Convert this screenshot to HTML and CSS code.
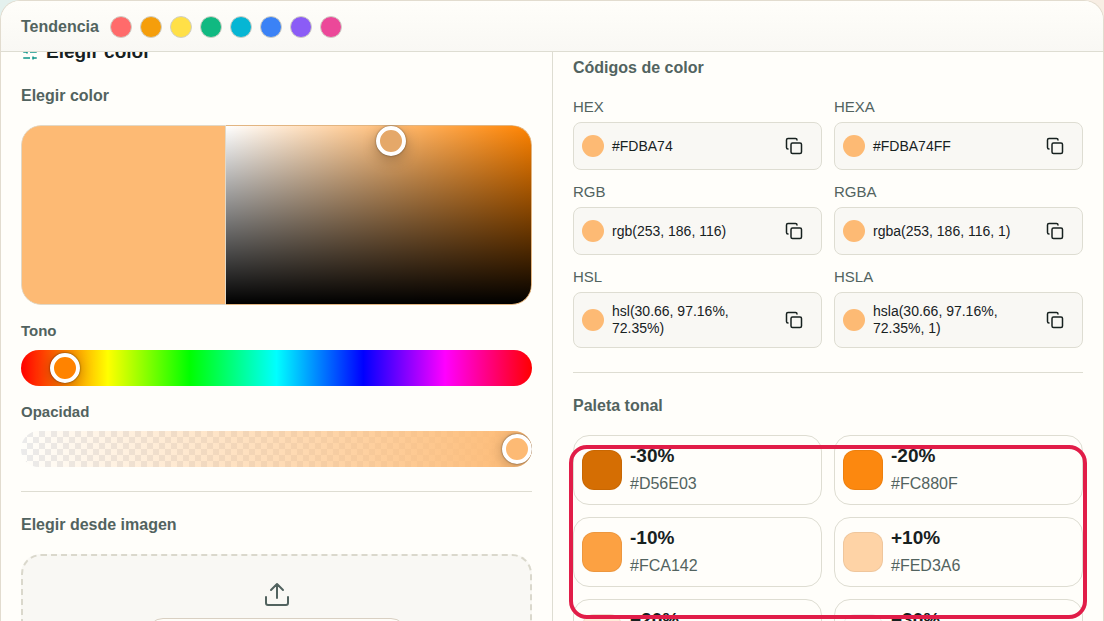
FILE: index.html
```html
<!DOCTYPE html>
<html lang="es">
<head>
    <meta charset="UTF-8">
    <meta name="viewport" content="width=device-width, initial-scale=1.0">
    <title>Elegir color</title>
    <link rel="stylesheet" href="styles.css">
</head>
<body>
    <svg class="sprite" aria-hidden="true">
        <symbol id="copy" viewBox="0 0 24 24">
            <rect x="8" y="8" width="14" height="14" rx="2"/>
            <path d="M4 16c-1.1 0-2-.9-2-2V4c0-1.1.9-2 2-2h10c1.1 0 2 .9 2 2"/>
        </symbol>
    </svg>
    <div class="panel">
        <header class="trend">
            <span class="trend-title">Tendencia</span>
            <button class="dot coral" aria-label="#FF6B6B"></button>
            <button class="dot amber" aria-label="#F59E0B"></button>
            <button class="dot yellow" aria-label="#FFE047"></button>
            <button class="dot green" aria-label="#10B981"></button>
            <button class="dot cyan" aria-label="#06B6D4"></button>
            <button class="dot blue" aria-label="#3B82F6"></button>
            <button class="dot violet" aria-label="#8B5CF6"></button>
            <button class="dot pink" aria-label="#EC4899"></button>
        </header>
        <main class="columns">
            <section class="col col-left">
                <h2 class="title">
                    <svg class="tune" viewBox="0 0 24 24"><path d="M3 4h7M14 4h7M14 2v4M3 12h5M12 12h9M8 10v4M3 20h9M16 20h5M16 18v4"/></svg>
                    Elegir color
                </h2>
                <h3 class="subtitle">Elegir color</h3>
                <div class="picker">
                    <div class="sample"></div>
                    <div class="area"><span class="handle"></span></div>
                </div>
                <label class="slider-label" for="hue">Tono</label>
                <input class="slider hue" id="hue" type="range" min="0" max="360" value="22">
                <label class="slider-label" for="alpha">Opacidad</label>
                <input class="slider alpha" id="alpha" type="range" min="0" max="100" value="100">
                <hr>
                <h3 class="subtitle">Elegir desde imagen</h3>
                <div class="dropzone">
                    <svg class="upload" viewBox="0 0 24 24"><path d="M12 16V2M6 8l6-6 6 6M1 15v6q0 2 2 2h18q2 0 2-2v-6"/></svg>
                    <button class="upload-btn" aria-label="Elegir desde imagen"></button>
                </div>
            </section>
            <section class="col col-right">
                <h3 class="subtitle">Códigos de color</h3>
                <div class="codes">
                    <div class="code">
                        <span class="code-name">HEX</span>
                        <div class="code-box"><i class="chip"></i><span class="value">#FDBA74</span><button class="copy" aria-label="HEX"><svg><use href="#copy"/></svg></button></div>
                    </div>
                    <div class="code">
                        <span class="code-name">HEXA</span>
                        <div class="code-box"><i class="chip"></i><span class="value">#FDBA74FF</span><button class="copy" aria-label="HEXA"><svg><use href="#copy"/></svg></button></div>
                    </div>
                    <div class="code">
                        <span class="code-name">RGB</span>
                        <div class="code-box"><i class="chip"></i><span class="value">rgb(253, 186, 116)</span><button class="copy" aria-label="RGB"><svg><use href="#copy"/></svg></button></div>
                    </div>
                    <div class="code">
                        <span class="code-name">RGBA</span>
                        <div class="code-box"><i class="chip"></i><span class="value">rgba(253, 186, 116, 1)</span><button class="copy" aria-label="RGBA"><svg><use href="#copy"/></svg></button></div>
                    </div>
                    <div class="code">
                        <span class="code-name">HSL</span>
                        <div class="code-box"><i class="chip"></i><span class="value">hsl(30.66, 97.16%, 72.35%)</span><button class="copy" aria-label="HSL"><svg><use href="#copy"/></svg></button></div>
                    </div>
                    <div class="code">
                        <span class="code-name">HSLA</span>
                        <div class="code-box"><i class="chip"></i><span class="value">hsla(30.66, 97.16%, 72.35%, 1)</span><button class="copy" aria-label="HSLA"><svg><use href="#copy"/></svg></button></div>
                    </div>
                </div>
                <hr>
                <h3 class="subtitle">Paleta tonal</h3>
                <div class="tones">
                    <button class="tone"><i class="swatch" style="background:#D56E03"></i><span><b>-30%</b><small>#D56E03</small></span></button>
                    <button class="tone"><i class="swatch" style="background:#FC880F"></i><span><b>-20%</b><small>#FC880F</small></span></button>
                    <button class="tone"><i class="swatch" style="background:#FCA142"></i><span><b>-10%</b><small>#FCA142</small></span></button>
                    <button class="tone"><i class="swatch" style="background:#FED3A6"></i><span><b>+10%</b><small>#FED3A6</small></span></button>
                    <button class="tone"><i class="swatch" style="background:#FEECD9"></i><span><b>+20%</b><small>#FEECD9</small></span></button>
                    <button class="tone"><i class="swatch" style="background:#FFFDFB"></i><span><b>+30%</b><small>#FFFDFB</small></span></button>
                    <div class="highlight"></div>
                </div>
            </section>
        </main>
    </div>
</body>
</html>
```
FILE: styles.css
```css
*{
    box-sizing: border-box;
}
body, html{
    margin: 0;
    height: 100%;
    overflow: hidden;
}
body{
    background: linear-gradient(90deg, #e4f1ee, #f8eee4);
    color: #17211f;
    font-family: "Liberation Sans", Arial, sans-serif;
    font-size: 16px;
    line-height: 24px;
}
button{
    font-family: inherit;
    color: inherit;
    padding: 0;
    cursor: pointer;
}
h2, h3{
    margin: 0;
}
.sprite{
    display: none;
}
.panel{
    display: flex;
    flex-direction: column;
    height: 100vh;
    border: 1px solid #e2dccf;
    border-bottom: none;
    border-radius: 20px 20px 0 0;
    background-color: #fffefa;
    overflow: hidden;
}

/* Tendencia */
.trend{
    display: flex;
    align-items: center;
    gap: 8px;
    flex: none;
    height: 51px;
    padding: 1px 20px 0;
    border-bottom: 1px solid #deddd2;
    background: linear-gradient(#fffefa, #f9f8f4);
}
.trend-title{
    margin-right: 3px;
    color: #52635f;
    font-weight: bold;
}
.dot{
    width: 22px;
    height: 22px;
    border: 1px solid #d0cfc5;
    border-radius: 50%;
}
.coral{ background-color: #ff6b6b; }
.amber{ background-color: #f59e0b; }
.yellow{ background-color: #ffe047; }
.green{ background-color: #10b981; }
.cyan{ background-color: #06b6d4; }
.blue{ background-color: #3b82f6; }
.violet{ background-color: #8b5cf6; }
.pink{ background-color: #ec4899; }

.columns{
    display: grid;
    grid-template-columns: 1fr 1fr;
    flex: 1;
    min-height: 0;
    overflow: hidden;
}
.col{
    display: flex;
    flex-direction: column;
    padding: 0 20px;
}
.col-left{
    margin-top: -12px;
}
.col-right{
    padding-top: 4px;
    border-left: 1px solid #deddd2;
}
.title{
    display: flex;
    align-items: center;
    gap: 7px;
    margin-bottom: 20px;
    font-size: 19px;
}
.tune{
    width: 18px;
    height: 18px;
    fill: none;
    stroke: #0d9488;
    stroke-width: 2;
}
.subtitle{
    color: #52635f;
    font-size: 16px;
    margin-bottom: 17px;
}
hr{
    width: 100%;
    height: 1px;
    margin: 24px 0 21px;
    border: none;
    background-color: #deddd2;
}

/* Selector */
.picker{
    display: flex;
    height: 180px;
    margin-bottom: 14px;
    border-radius: 20px;
    overflow: hidden;
}
.sample{
    flex: 2;
    border: 1px solid #e2d8c6;
    border-radius: 20px 0 0 20px;
    background-color: #fdba74;
}
.area{
    position: relative;
    flex: 3;
    border: 1px solid #e2b581;
    border-left: none;
    border-radius: 0 20px 20px 0;
    background: linear-gradient(to top, #000, transparent), linear-gradient(to right, #fff, #ff8300);
}
.handle{
    position: absolute;
    left: 54%;
    top: 0;
    width: 30px;
    height: 30px;
    margin-left: -15px;
    border: 4px solid #fff;
    border-radius: 50%;
    box-shadow: 0 0 2px rgba(0, 0, 0, 0.5), 0 4px 14px rgba(0, 0, 0, 0.25);
    background-color: #e5a869;
}
.slider-label{
    margin-bottom: 7px;
    color: #52635f;
    font-weight: bold;
    font-size: 15px;
}
.slider{
    -webkit-appearance: none;
    appearance: none;
    width: 100%;
    height: 36px;
    margin: 0 0 14px;
    border-radius: 18px;
    overflow: hidden;
}
.slider::-webkit-slider-thumb{
    -webkit-appearance: none;
    width: 30px;
    height: 30px;
    border: 4px solid #fff;
    border-radius: 50%;
    box-shadow: 0 0 2px rgba(0, 0, 0, 0.6), 0 2px 14px rgba(0, 0, 0, 0.25);
    background-color: #ff8300;
}
.hue{
    background: linear-gradient(to right, #f00, #ff0 17%, #0f0 33%, #0ff 50%, #00f 67%, #f0f 83%, #f00);
}
.alpha{
    margin-bottom: 0;
    background: linear-gradient(to right, transparent, #fdba74), repeating-conic-gradient(#ebebeb 0 25%, #fffefa 0 50%) 0 0 / 12px 12px;
}
.alpha::-webkit-slider-thumb{
    background-color: #fdba74;
}
.dropzone{
    display: flex;
    flex-direction: column;
    align-items: center;
    gap: 12px;
    padding: 26px 24px;
    border: 2px dashed #dad8cc;
    border-radius: 20px;
    background-color: #f9f8f4;
}
.upload{
    width: 24px;
    height: 24px;
    fill: none;
    stroke: #52635f;
    stroke-width: 2;
    stroke-linecap: round;
    stroke-linejoin: round;
}
.upload-btn{
    width: 260px;
    height: 44px;
    border: 1px solid #d9d0c2;
    border-radius: 16px;
    background-color: #fffdf8;
}

/* Códigos */
.codes{
    display: grid;
    grid-template-columns: 1fr 1fr;
    gap: 12px;
}
.code{
    display: flex;
    flex-direction: column;
    gap: 5px;
}
.code-name{
    color: #52635f;
    font-size: 15px;
    line-height: 20px;
}
.code-box{
    display: flex;
    align-items: center;
    gap: 8px;
    min-height: 48px;
    padding: 10px 18px 10px 8px;
    border: 1px solid #deddd2;
    border-radius: 8px;
    background-color: #f9f8f4;
}
.chip{
    flex: none;
    width: 22px;
    height: 22px;
    border-radius: 50%;
    background-color: #fdba74;
}
.value{
    flex: 1;
    padding-right: 20px;
    font-size: 14px;
    line-height: 17px;
}
.copy{
    display: flex;
    border: none;
    background: none;
}
.copy svg{
    width: 18px;
    height: 18px;
    fill: none;
    stroke: #17211f;
    stroke-width: 2;
    stroke-linecap: round;
    stroke-linejoin: round;
}

/* Paleta */
.tones{
    position: relative;
    display: grid;
    grid-template-columns: 1fr 1fr;
    gap: 12px;
}
.tone{
    display: flex;
    align-items: center;
    gap: 8px;
    padding: 6px 8px;
    border: 1px solid #deddd2;
    border-radius: 16px;
    background: none;
    text-align: left;
}
.swatch{
    width: 40px;
    height: 40px;
    border: 1px solid rgba(0, 0, 0, 0.06);
    border-radius: 12px;
}
.tone b, .tone small{
    display: block;
    line-height: 28px;
}
.tone b{
    font-size: 19px;
}
.tone small{
    color: #52635f;
    font-size: 16px;
}
.highlight{
    position: absolute;
    top: 10px;
    left: -4px;
    right: -4px;
    height: 174px;
    border: 4px solid #e11d48;
    border-radius: 18px;
    pointer-events: none;
}
```
